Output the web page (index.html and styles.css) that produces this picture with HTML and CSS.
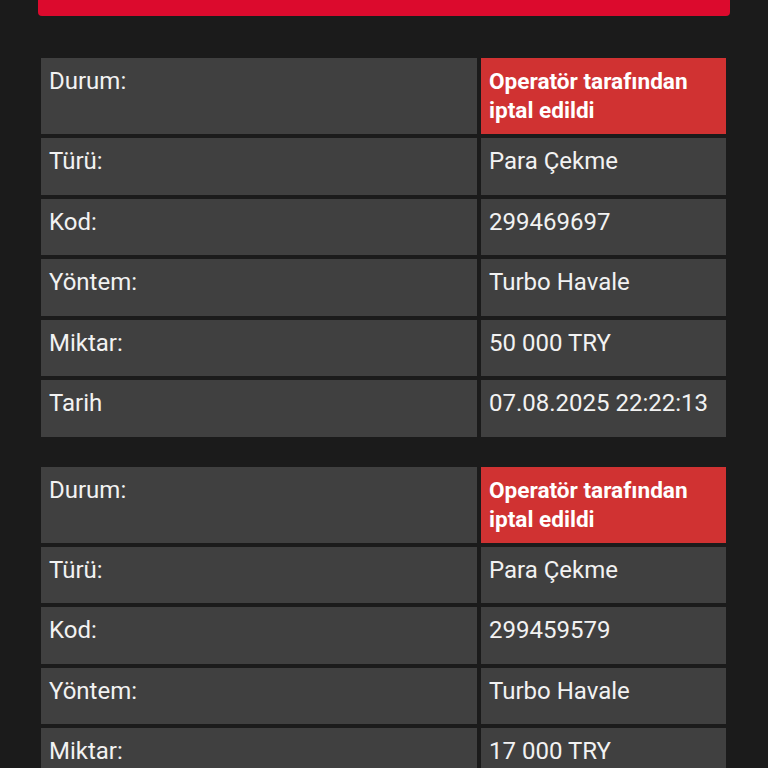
FILE: index.html
```html
<!DOCTYPE html>
<html lang="tr">
<head>
<meta charset="utf-8">
<link rel="stylesheet" href="styles.css">
</head>
<body>
<div class="page">
  <div class="topbar"></div>
  <div class="list">
    <div class="record">
      <div class="cell label">Durum:</div><div class="cell value status">Operatör tarafından iptal edildi</div>
      <div class="cell label">Türü:</div><div class="cell value">Para Çekme</div>
      <div class="cell label">Kod:</div><div class="cell value">299469697</div>
      <div class="cell label">Yöntem:</div><div class="cell value">Turbo Havale</div>
      <div class="cell label">Miktar:</div><div class="cell value">50 000 TRY</div>
      <div class="cell label">Tarih</div><div class="cell value">07.08.2025 22:22:13</div>
    </div>
    <div class="record">
      <div class="cell label">Durum:</div><div class="cell value status">Operatör tarafından iptal edildi</div>
      <div class="cell label">Türü:</div><div class="cell value">Para Çekme</div>
      <div class="cell label">Kod:</div><div class="cell value">299459579</div>
      <div class="cell label">Yöntem:</div><div class="cell value">Turbo Havale</div>
      <div class="cell label">Miktar:</div><div class="cell value">17 000 TRY</div>
      <div class="cell label">Tarih</div><div class="cell value">07.08.2025 21:40:02</div>
    </div>
  </div>
</div>
</body>
</html>
```
FILE: styles.css
```css
html, body {
  margin: 0;
  padding: 0;
  background: #1b1b1b;
  height: 768px;
  overflow: hidden;
}
body {
  font-family: Roboto, "Liberation Sans", sans-serif;
  color: #f2f2f2;
}
.page {
  padding: 0 38px 0 38px;
}
.topbar {
  height: 16px;
  background: #dc0a2d;
  border-radius: 0 0 4px 4px;
}
.list {
  padding: 42px 4px 0 3px;
  display: flex;
  flex-direction: column;
  gap: 30px;
}
.record {
  display: grid;
  grid-template-columns: 436px 245px;
  gap: 4px;
}
.cell {
  background: #404040;
  min-height: 56.5px;
  box-sizing: border-box;
  padding: 9px 8px 8px 8px;
  font-size: 24px;
  line-height: 29px;
}
.status {
  min-height: 76px;
  background: #d03232;
  font-weight: 700;
  font-size: 22.6px;
  color: #fff;
}
```
